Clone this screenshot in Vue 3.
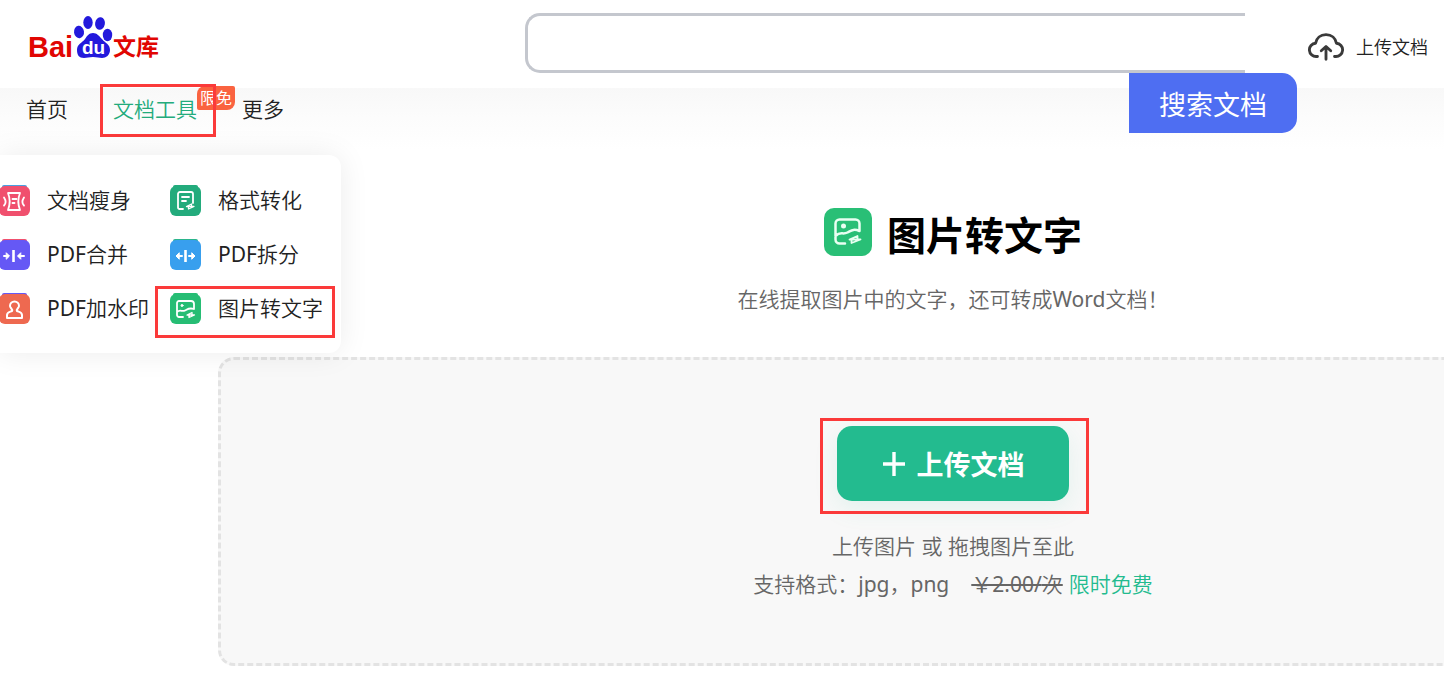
<script setup>
const tools = [
  { name: '文档瘦身', icon: 'slim', color: '#f0506e', edge: '#4a9fe0' },
  { name: '格式转化', icon: 'convert', color: '#23ab7c', edge: '#23ab7c' },
  { prefix: 'PDF', name: '合并', icon: 'merge', color: '#6558f5', edge: '#f0506e' },
  { prefix: 'PDF', name: '拆分', icon: 'split', color: '#389fee', edge: '#2bb58c' },
  { prefix: 'PDF', name: '加水印', icon: 'stamp', color: '#ee6950', edge: '#6558f5' },
  { name: '图片转文字', icon: 'image', color: '#26bd74', edge: '#26bd74', marked: true },
]
</script>

<template>
  <div class="page">
    <header class="header">
      <a class="logo" href="#" aria-label="百度文库">
        <svg width="140" height="60" viewBox="0 0 140 60">
          <text class="logo-bai" x="4" y="47">Bai</text>
          <g fill="#2319dc">
            <ellipse cx="55" cy="22" rx="5" ry="6.200" transform="rotate(-8 55 22)" />
            <ellipse cx="64" cy="12.500" rx="4.700" ry="6.500" />
            <ellipse cx="76" cy="13.500" rx="4.900" ry="6.300" transform="rotate(10 76 13.500)" />
            <ellipse cx="83.500" cy="25" rx="4.700" ry="6.200" />
            <path d="M69 23c4 0 6 3 9 6 3 4 8 5 8 11 0 5-4 8-8 8-3 0-5-1-9-1s-6 1-9 1c-5 0-7-3-7-8 0-6 5-7 8-11 2-3 4-6 8-6z" />
          </g>
          <text class="logo-du" x="58" y="44">du</text>
          <text class="logo-wenku" x="89" y="45">文库</text>
        </svg>
      </a>
      <form class="search" @submit.prevent>
        <input class="search-input" type="text" aria-label="搜索文档" />
        <button class="search-button" type="submit">搜索文档</button>
      </form>
      <a class="upload-link" href="#">
        <svg width="36" height="30" viewBox="0 0 38 30" fill="none" stroke="#3a3a3a" stroke-width="3" stroke-linecap="round" stroke-linejoin="round">
          <path d="M10 25H9a7 7 0 0 1-1-14C9 6 13 2 19 2S29 6 30 11a7 7 0 0 1-1 14h-1" />
          <path d="M19 28V16M14 19l5-4.500 5 4.500" />
        </svg>
        <span>上传文档</span>
      </a>
    </header>

    <nav class="nav">
      <a class="nav-item" href="#">首页</a>
      <div class="nav-tools">
        <a class="nav-item active" href="#">文档工具</a>
        <span class="badge">限免</span>
        <span class="mark"></span>
      </div>
      <a class="nav-item" href="#">更多</a>
      <div class="menu">
        <a v-for="tool in tools" :key="tool.icon" class="tool" href="#">
          <svg class="tool-icon" viewBox="0 0 31 31" fill="none" stroke="#fff" stroke-width="1.800" stroke-linecap="round" stroke-linejoin="round">
            <rect x="3" y="0" width="25" height="6" rx="2" :fill="tool.edge" stroke="none" />
            <rect x="0" y="1" width="31" height="30" rx="6" :fill="tool.color" stroke="none" />
            <template v-if="tool.icon === 'slim'">
              <path d="M9 8h12c-2 5-2 12 0 17H9c2-5 2-12 0-17zM13.500 14h4M13.500 18h2M5 12.500c2 3 2 6 0 8M25 12.500c-2 3-2 6 0 8" />
            </template>
            <template v-else-if="tool.icon === 'convert'">
              <path d="M13 24H9.500A1.500 1.500 0 0 1 8 22.500V9a2 2 0 0 1 2-2h11a2 2 0 0 1 2 2v9M12 12h7M12 16h4" />
              <path d="M23.500 21.500H16.500L21.500 19v2M17 21.500h7L18.500 24v-2" stroke-width="1.300" />
            </template>
            <template v-else-if="tool.icon === 'merge'">
              <path d="M14.500 11v12" stroke-width="2.600" stroke-linecap="butt" />
              <path d="M5 17h4M20 17h5" stroke-width="2" />
              <path d="M7.500 14l3 3-3 3zM21.500 14l-3 3 3 3z" fill="#fff" stroke-width="1" />
            </template>
            <template v-else-if="tool.icon === 'split'">
              <path d="M15.500 11v12" stroke-width="2.600" stroke-linecap="butt" />
              <path d="M7 17h5M19 17h5" stroke-width="2" />
              <path d="M9 14l-3 3 3 3zM22 14l3 3-3 3z" fill="#fff" stroke-width="1" />
            </template>
            <template v-else-if="tool.icon === 'stamp'">
              <path d="M13 18c1-2-2-3-2-5a4.500 4.500 0 0 1 9 0c0 2-3 3-2 5 2 1 5 1 5 4v3H8v-3c0-3 3-3 5-4z" stroke-width="2" />
            </template>
            <template v-else>
              <path d="M13 24h-4a2 2 0 0 1-2-2V10a2 2 0 0 1 2-2h12a3 3 0 0 1 3 3v5M7 19c3-3 5 0 8-1.500s4-3 9-1.500" />
              <circle cx="12" cy="12.500" r="1" fill="#fff" stroke-width="1" />
              <path d="M24 22H17L22 19.500v2M17.500 22h7L19 24.500v-2" stroke-width="1.300" />
            </template>
          </svg>
          <span><span v-if="tool.prefix" class="latin">{{ tool.prefix }}</span>{{ tool.name }}</span>
          <span v-if="tool.marked" class="mark"></span>
        </a>
      </div>
    </nav>

    <main class="main">
      <div class="title">
        <svg class="title-icon" viewBox="0 0 48 48" fill="none" stroke="#e9fff2" stroke-linecap="round" stroke-linejoin="round">
          <rect width="48" height="48" rx="10" fill="#29bf76" stroke="none" />
          <path d="M21 35.500h-5.500a4 4 0 0 1-4-4v-16a4 4 0 0 1 4-4h16a4 4 0 0 1 4 4v7.500M11.500 28c5-5 7-1 12-3.500 4-2 6-4 12-1.500" stroke-width="2.500" />
          <circle cx="19.500" cy="18" r="2.500" fill="#e9fff2" stroke="none" />
          <path d="M36 31.500H25.500L33.500 28v3M26 31.500h10.500L27.500 35v-3" stroke-width="1.800" />
        </svg>
        <h1>图片转文字</h1>
      </div>
      <p class="subtitle">在线提取图片中的文字，还可转成<span class="latin">Word</span>文档！</p>

      <section class="dropzone">
        <div class="upload-wrap">
          <button class="upload-button" type="button">
            <svg width="24" height="24" viewBox="0 0 24 24" stroke="#fff" stroke-width="3.400">
              <path d="M1 12h22M12 0v24" />
            </svg>
            <span>上传文档</span>
          </button>
          <span class="mark"></span>
        </div>
        <p class="hint">上传图片 或 拖拽图片至此</p>
        <p class="hint">支持格式：<span class="latin">jpg</span>，<span class="latin">png</span><del><span class="latin">￥2.00/</span>次</del><span class="free">限时免费</span></p>
      </section>
    </main>
  </div>
</template>

<style>
body {
  margin: 0;
  background: #fff;
}
</style>

<style scoped>
.page {
  min-height: 100vh;
  overflow: hidden;
  background: linear-gradient(#fff 88px, #f8f8f8 88px, #fcfcfc 118px, #fff 150px);
  color: #222;
  font-family: "Noto Sans", "Noto Sans CJK SC", sans-serif;
  font-size: 21px;
  font-weight: 350;
  line-height: 32px;
}

a {
  color: inherit;
  text-decoration: none;
}

h1,
p {
  margin: 0;
}

button {
  border: 0;
  padding: 0;
  font-family: inherit;
  cursor: pointer;
}

.latin {
  font-weight: 400;
}

.header {
  position: relative;
  z-index: 3;
  display: flex;
  align-items: flex-start;
  height: 88px;
}

.logo {
  flex: 1;
  padding: 10px 0 0 24px;
}

.logo svg {
  display: block;
}

.logo text {
  font-weight: 700;
}

.logo-bai {
  fill: #e10602;
  font-family: "Liberation Sans", sans-serif;
  font-size: 29px;
}

.logo-du {
  fill: #fff;
  font-family: "Liberation Sans", sans-serif;
  font-size: 19px;
}

.logo-wenku {
  fill: #e10602;
  font-family: "Noto Sans CJK SC", sans-serif;
  font-size: 23px;
}

.search {
  display: flex;
  flex: 0 1 772px;
  flex-wrap: wrap;
  margin-top: 13px;
}

.search-input {
  box-sizing: border-box;
  flex: 0 1 720px;
  height: 60px;
  margin-right: 52px;
  padding: 0 20px;
  border: 3px solid #c4c7ce;
  border-right: 0;
  border-radius: 15px 0 0 15px;
  outline: none;
  background: #fff;
  font: inherit;
}

.search-button {
  width: 168px;
  height: 60px;
  margin-left: auto;
  border-radius: 0 15px 15px 0;
  background: #4e6ef2;
  color: #fff;
  font-size: 27px;
  font-weight: 400;
}

.upload-link {
  display: flex;
  flex: 0 0 136px;
  align-items: center;
  gap: 12px;
  margin-top: 31px;
  padding-left: 11px;
  font-size: 18px;
}

.nav {
  position: relative;
  z-index: 2;
  display: flex;
  gap: 45px;
  height: 67px;
  padding-left: 26px;
}

.nav-item {
  display: block;
  padding-top: 5px;
}

.nav-tools {
  position: relative;
}

.active {
  color: #23ab7c;
}

.badge {
  position: absolute;
  top: -2px;
  left: 84px;
  width: 38px;
  height: 24px;
  border-radius: 8px 2px 8px 2px;
  background: #fa6340;
  color: #fff;
  font-size: 16px;
  font-weight: 400;
  line-height: 24px;
  text-align: center;
}

.mark {
  position: absolute;
  border: 3px solid #fb3a3a;
  pointer-events: none;
}

.nav-tools .mark {
  top: -4px;
  left: -13px;
  width: 110px;
  height: 47px;
}

.menu {
  position: absolute;
  top: 67px;
  left: -1px;
  display: grid;
  grid-template-columns: 171px 171px;
  grid-auto-rows: 54px;
  padding: 18px 0;
  border-radius: 0 12px 12px 0;
  background: #fff;
  box-shadow: 0 0 30px rgba(0, 0, 0, 0.08);
}

.tool {
  position: relative;
  display: flex;
  align-items: center;
  gap: 17px;
  white-space: nowrap;
}

.tool-icon {
  flex: none;
  width: 31px;
  height: 31px;
}

.tool .mark {
  top: 5px;
  left: -15px;
  width: 174px;
  height: 46px;
}

.main {
  margin: 53px -244px 0 218px;
}

.title {
  display: flex;
  align-items: center;
  justify-content: center;
  gap: 15px;
  height: 48px;
}

.title-icon {
  width: 48px;
  height: 48px;
}

h1 {
  padding-top: 5px;
  color: #000;
  font-size: 39px;
  font-weight: 700;
  line-height: 48px;
}

.subtitle {
  margin-top: 27px;
  color: #666;
  text-align: center;
}

.dropzone {
  display: flex;
  flex-direction: column;
  align-items: center;
  margin-top: 42px;
  padding: 66px 0 61px;
  border: 3px dashed #e3e3e3;
  border-radius: 16px;
  background: #f8f8f8;
  color: #666;
}

.upload-wrap {
  position: relative;
  margin-bottom: 25px;
}

.upload-wrap .mark {
  top: -8px;
  left: -17px;
  width: 263px;
  height: 90px;
}

.upload-button {
  display: flex;
  align-items: center;
  justify-content: center;
  gap: 11px;
  width: 232px;
  height: 75px;
  border-radius: 15px;
  background: #23bb8f;
  box-shadow: 0 8px 24px rgba(35, 187, 143, 0.1);
  color: #fff;
  font-size: 27px;
  font-weight: 700;
}

.hint {
  margin-top: 3px;
  line-height: 35px;
}

del {
  margin: 0 6px 0 22px;
}

.free {
  color: #23bb8f;
}
</style>
